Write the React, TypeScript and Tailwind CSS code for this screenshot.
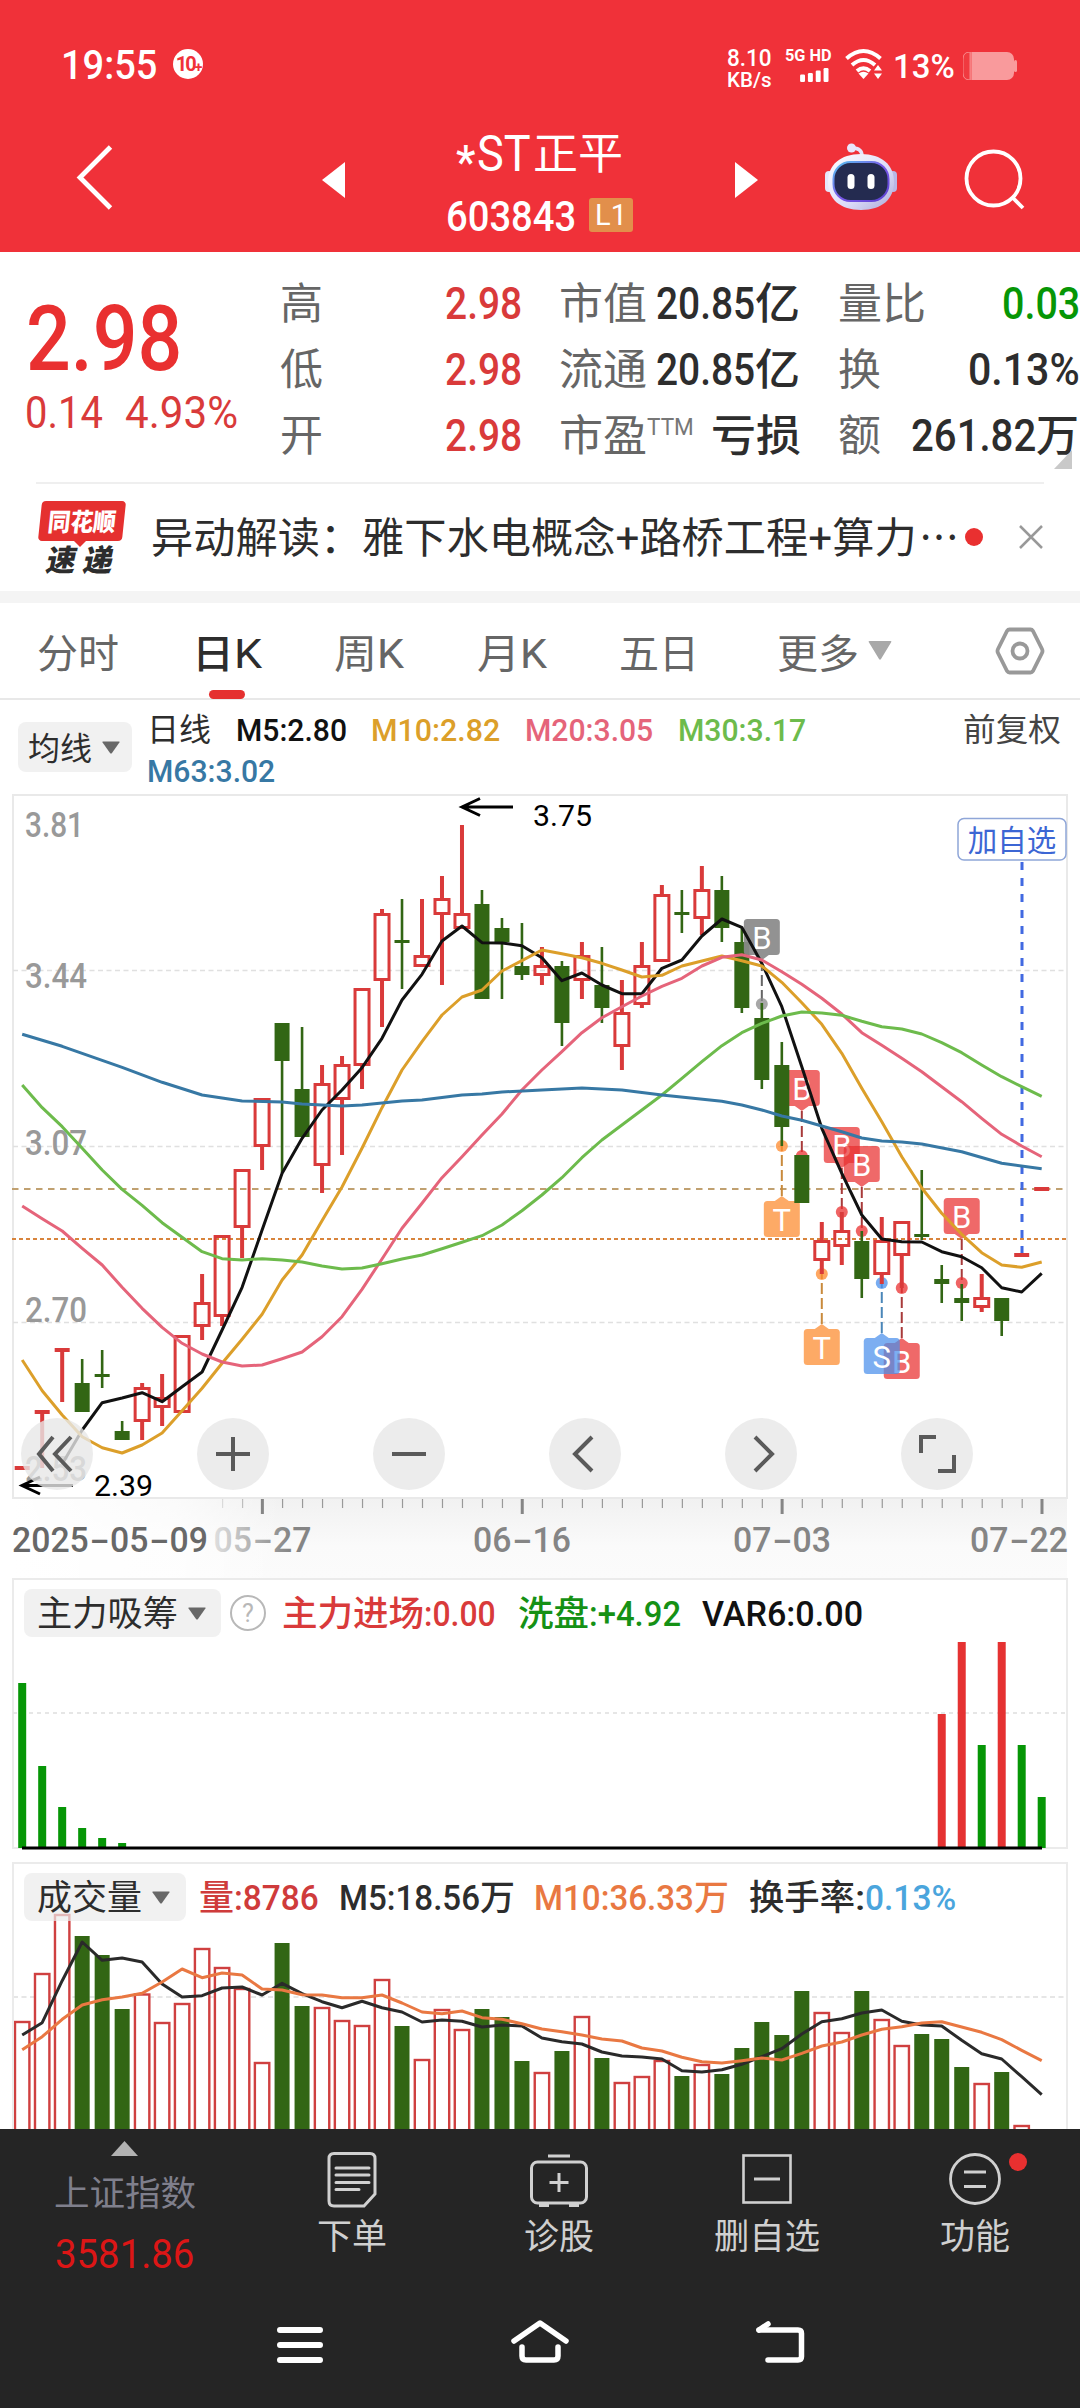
import { useLayoutEffect, useRef, useState, type ReactNode } from "react";

/** Text condensed or widened horizontally so that it fills its box exactly. */
function Fit({ className = "", children }: { className?: string; children: ReactNode }) {
  const box = useRef<HTMLDivElement>(null);
  const ink = useRef<HTMLSpanElement>(null);
  const [scale, setScale] = useState(1);
  useLayoutEffect(() => {
    if (box.current && ink.current && ink.current.offsetWidth > 0) {
      setScale(box.current.clientWidth / ink.current.offsetWidth);
    }
  }, []);
  return (
    <div ref={box} className={"shrink-0 leading-none whitespace-nowrap " + className}>
      <span ref={ink} className="inline-block origin-left" style={{ transform: `translateY(0.04em) scaleX(${scale})` }}>
        {children}
      </span>
    </div>
  );
}

const X0 = 22.2;
const STEP = 19.99;
const px = (i: number) => X0 + STEP * i;

/* [kind, high, top, bottom, low]; kind r = hollow red, g = solid green */
type Candle = ["r" | "g", number, number, number, number];
const candles: Candle[] = [
  ["r", 1468, 1468, 1468, 1468],
  ["r", 1411.5, 1412, 1412, 1468],
  ["r", 1350, 1350, 1350, 1402],
  ["g", 1359, 1383, 1412, 1412],
  ["g", 1350, 1376, 1376, 1388],
  ["g", 1421, 1431, 1440, 1440],
  ["r", 1383, 1387, 1422, 1440],
  ["r", 1374, 1397, 1408, 1426],
  ["r", 1335, 1335, 1413, 1413],
  ["r", 1274, 1302, 1327, 1340],
  ["r", 1235, 1235, 1317, 1326],
  ["r", 1169, 1169, 1228, 1258],
  ["r", 1098, 1098, 1147, 1170],
  ["g", 1023, 1023, 1061, 1173],
  ["g", 1027, 1089, 1137, 1137],
  ["r", 1065, 1083, 1166, 1193],
  ["r", 1056, 1064, 1100, 1155],
  ["r", 988, 988, 1066, 1089],
  ["r", 909, 913, 981, 1027],
  ["g", 899, 942, 942, 989],
  ["r", 899, 955, 967, 967],
  ["r", 876, 898, 915, 985],
  ["r", 825, 913, 929, 929],
  ["g", 890, 904, 999, 999],
  ["g", 918, 928, 942, 999],
  ["g", 923, 966, 975, 980],
  ["r", 947, 965, 976, 985],
  ["g", 961, 966, 1023, 1046],
  ["r", 942, 955, 981, 999],
  ["g", 947, 985, 1008, 1023],
  ["r", 980, 1012, 1047, 1070],
  ["r", 942, 965, 1005, 1008],
  ["r", 885, 894, 962, 962],
  ["g", 890, 914, 914, 933],
  ["r", 866, 889, 919, 935],
  ["g", 876, 890, 928, 942],
  ["g", 928, 942, 1008, 1013],
  ["g", 1003, 1018, 1080, 1089],
  ["g", 1042, 1065, 1127, 1146],
  ["g", 1155, 1155, 1203, 1203],
  ["r", 1222, 1240, 1261, 1274],
  ["r", 1212, 1230, 1247, 1265],
  ["g", 1231, 1241, 1279, 1298],
  ["r", 1217, 1240, 1275, 1284],
  ["r", 1221, 1221, 1256, 1288],
  ["g", 1170, 1236, 1236, 1240],
  ["g", 1265, 1279, 1284, 1303],
  ["g", 1284, 1298, 1303, 1321],
  ["r", 1274, 1297, 1308, 1312],
  ["g", 1298, 1298, 1321, 1336],
  ["r", 1255, 1255, 1255, 1255],
  ["r", 1189, 1189, 1189, 1189],
];

const ma5 = [1464, 1430, 1402.7, 1398, 1392.7, 1401.7, 1386.7, 1372, 1330, 1287.3, 1230, 1173.3, 1138.3, 1110, 1090, 1067.7, 1038.3, 1000, 974.3, 941, 926, 942.7, 943, 945.7, 957.7, 980.7, 973, 985, 993.7, 993.7, 968.3, 960, 936, 919, 927.3, 963.3, 1006.7, 1066.7, 1128.3, 1173.3, 1215, 1239, 1241.7, 1242, 1251.7, 1256.7, 1267.7, 1287.7, 1292, 1273.3];
const ma10 = [1360, 1390.7, 1415, 1436.7, 1447.7, 1453, 1445, 1433, 1410.7, 1388.3, 1363.3, 1339.3, 1314.3, 1280, 1255, 1220.7, 1187, 1148.3, 1107.7, 1070, 1041.7, 1015, 997, 990, 971, 960.7, 950, 953.7, 957.7, 963.3, 970, 977, 975.3, 966, 961, 956, 960.7, 966, 982.3, 1002.7, 1024.3, 1053.3, 1088.3, 1121.7, 1156.7, 1188, 1213.3, 1234.3, 1252.7, 1265, 1267.3, 1262];
const ma20 = [1206, 1218.7, 1231, 1248.3, 1265, 1287.3, 1308.3, 1327.3, 1343.3, 1354, 1362, 1366, 1365, 1358.7, 1352, 1336.7, 1316.7, 1289.3, 1259, 1228.3, 1203.3, 1177.7, 1156.7, 1135, 1114, 1090, 1070, 1051.7, 1032.7, 1017.7, 1006.7, 996, 986.3, 978.3, 966, 957.3, 954.7, 960, 971.7, 984.3, 998.3, 1014, 1032.7, 1045.3, 1058.3, 1071.7, 1086.7, 1101.7, 1118.3, 1134.3, 1146, 1156.7];
const ma30 = [1085, 1107.7, 1126.7, 1148.3, 1170, 1189.3, 1205.3, 1222.7, 1237.3, 1251.7, 1258.7, 1260, 1258.7, 1260, 1262, 1266, 1269, 1268, 1263.7, 1259, 1255, 1248.7, 1242.3, 1235.7, 1225, 1210.7, 1195, 1177.7, 1157.7, 1140, 1125, 1110, 1095, 1078.3, 1061.7, 1045.7, 1032.7, 1023.3, 1016, 1012, 1013, 1015.3, 1021.3, 1026.7, 1029, 1034, 1042.7, 1052.7, 1065, 1076.7, 1086.7, 1096.3];
const ma63: [number, number][] = [[0, 1034.3], [2, 1046.3], [4, 1060.3], [5, 1067.3], [7, 1082.3], [9, 1095], [11, 1101], [13, 1102], [14, 1104], [16, 1106], [17, 1105], [19, 1101], [20, 1100], [22, 1095], [23, 1094], [24, 1092], [26, 1090], [28, 1088], [30, 1090], [32, 1095], [35, 1101.3], [36, 1105], [37, 1110], [38, 1116], [39, 1120.3], [41, 1131.7], [42, 1138], [43, 1141], [44, 1142], [45, 1144], [47, 1151.7], [49, 1163.3], [51, 1168.7]];

const line = (ys: number[], start = 0) => ys.map((y, k) => `${px(k + start).toFixed(1)},${y}`).join(" ");

/* [index, box top, dot y, letter, fill, stem] */
const GRAY = "#8a8a8a";
const RED = "#e93030";
const ORANGE = "#fd8a2c";
const BLUE = "#4a90ec";
const flags: [number, number, number, string, string, string][] = [
  [37, 919, 1004, "B", GRAY, "#666666"],
  [39, 1070, 1156, "B", RED, "#a83a3a"],
  [41, 1127, 1212, "B", RED, "#a83a3a"],
  [42, 1146, 1231, "B", RED, "#a83a3a"],
  [38, 1201, 1146, "T", ORANGE, "#c98a3c"],
  [40, 1329, 1274, "T", ORANGE, "#c98a3c"],
  [44, 1343, 1288, "B", RED, "#a83a3a"],
  [43, 1338, 1283, "S", BLUE, "#4a86b8"],
  [47, 1198, 1283, "B", RED, "#a83a3a"],
];

function Flag({ f }: { f: [number, number, number, string, string, string] }) {
  const [i, top, dot, letter, fill, stem] = f;
  const x = px(i);
  const below = top > dot;
  const tip = below ? top - 5 : top + 41;
  const base = below ? top : top + 36;
  return (
    <g>
      <line x1={x} x2={x} y1={tip} y2={dot} stroke={stem} strokeWidth="2" strokeDasharray="11 4" />
      <circle cx={x} cy={dot} r="6" fill={fill} opacity="0.75" />
      <g opacity={letter === "B" && fill === GRAY ? 0.93 : 0.72}>
        <rect x={x - 18} y={top} width="36" height="36" rx="3.5" fill={fill} />
        <path d={`M${x - 7} ${base}L${x} ${tip}L${x + 7} ${base}Z`} fill={fill} />
      </g>
      <text x={x} y={top + 29.5} textAnchor="middle" fontSize="31" fill="#fff" fontFamily="Roboto, sans-serif">
        {letter}
      </text>
    </g>
  );
}

/** Axis date set on fixed digit cells, with the hyphens stretched to a full cell. */
function AxisDate({ x, text, fill }: { x: number; text: string; fill: string }) {
  let at = x;
  return (
    <text y="1552" fill={fill}>
      {text.split(/(-)/).map((part, k) => {
        const start = at;
        const hyphen = part === "-";
        const w = hyphen ? 20 : part.length * 19.2;
        at += w + (hyphen ? 1.2 : 0);
        return (
          <tspan key={k} x={hyphen ? start + 1 : start} textLength={w} lengthAdjust="spacingAndGlyphs">
            {part}
          </tspan>
        );
      })}
    </text>
  );
}

function MainChart() {
  const ticks = Array.from({ length: 42 }, (_, k) => k + 10);
  return (
    <svg className="block" width="1080" height="788" viewBox="0 790 1080 788" fontFamily="Roboto, sans-serif">
      <defs>
        <linearGradient id="fadeText" gradientUnits="userSpaceOnUse" x1="205" x2="290" y1="0" y2="0">
          <stop offset="0" stopColor="#e9e9e9" />
          <stop offset="1" stopColor="#858585" />
        </linearGradient>
        <linearGradient id="axisBg" x1="0" x2="0" y1="0" y2="1">
          <stop offset="0" stopColor="#f1f1f1" />
          <stop offset="0.6" stopColor="#fafafa" />
          <stop offset="1" stopColor="#fbfbfb" />
        </linearGradient>
        <linearGradient id="axisFade" x1="0" x2="1" y1="0" y2="0">
          <stop offset="0" stopColor="#fff" />
          <stop offset="0.6" stopColor="#fff" stopOpacity="0.7" />
          <stop offset="1" stopColor="#fff" stopOpacity="0" />
        </linearGradient>
      </defs>
      <rect x="12" y="1499" width="1055" height="79" fill="url(#axisBg)" />
      <rect x="12" y="1499" width="270" height="79" fill="url(#axisFade)" />
      <rect x="13" y="795" width="1054" height="703" fill="#fff" stroke="#e9e9e9" strokeWidth="2" />
      {[970.5, 1146.5, 1322.5].map((y) => (
        <line key={y} x1="13" x2="1066" y1={y} y2={y} stroke="#e0e0e0" strokeWidth="1.5" strokeDasharray="5 3.5" />
      ))}
      <g fill="#999" fontSize="35" fontWeight="500">
        <text x="25" y="837" textLength="59" lengthAdjust="spacingAndGlyphs">3.81</text>
        <text x="25" y="988" textLength="62" lengthAdjust="spacingAndGlyphs">3.44</text>
        <text x="25" y="1155" textLength="62" lengthAdjust="spacingAndGlyphs">3.07</text>
        <text x="25" y="1322" textLength="62" lengthAdjust="spacingAndGlyphs">2.70</text>
        <text x="25" y="1481" textLength="62" lengthAdjust="spacingAndGlyphs">2.53</text>
      </g>
      <line x1="12" x2="1066" y1="1189" y2="1189" stroke="#c0a070" strokeWidth="2" strokeDasharray="6.5 5.5" />
      <line x1="12" x2="1066" y1="1239" y2="1239" stroke="#d8843c" strokeWidth="2" strokeDasharray="4 3" />
      <line x1="1022" x2="1022" y1="862" y2="1254" stroke="#4169e1" strokeWidth="3" strokeDasharray="8 8" />
      {candles.slice(0, 37).map((c, i) => <Bar key={i} c={c} i={i} />)}
      {flags.map((f, k) => <Flag key={k} f={f} />)}
      {candles.slice(37).map((c, i) => <Bar key={i} c={c} i={i + 37} />)}
      <g fill="none" strokeWidth="3" strokeLinejoin="round">
        <polyline points={line(ma5, 2)} stroke="#111" />
        <polyline points={line(ma10)} stroke="#dc9f2a" />
        <polyline points={line(ma20)} stroke="#e5647a" />
        <polyline points={line(ma30)} stroke="#6dbb4c" />
        <polyline points={ma63.map(([i, y]) => `${px(i)},${y}`).join(" ")} stroke="#3778a4" />
      </g>
      <g stroke="#000" strokeWidth="3" fill="none">
        <path d="M513 807H462M480 798.5L462 807L480 815.5" />
        <path d="M73 1485.500H22M40 1477L22 1485.500L40 1494" />
      </g>
      <g fill="#000" fontSize="30">
        <text x="533" y="826" textLength="59" lengthAdjust="spacingAndGlyphs">3.75</text>
        <text x="94" y="1495.500" textLength="59" lengthAdjust="spacingAndGlyphs">2.39</text>
      </g>
      <rect x="958" y="818.500" width="108" height="41.500" rx="6" fill="#fff" stroke="#8fa6d8" strokeWidth="1.500" />
      <text x="1012" y="851" textAnchor="middle" fontSize="29.5" fill="#3c66d4" fontFamily="'Noto Sans CJK SC', sans-serif">加自选</text>
      {ticks.map((i) => {
        const big = [12, 25, 38, 51].includes(i);
        return (
          <rect key={i} x={px(i) - (big ? 1.2 : 0.1)} y="1499" width={big ? 3 : 1.2} height={big ? 15 : 9} fill={big ? "#858585" : "#999"} opacity={i === 10 ? 0.3 : i === 11 ? 0.6 : 1} />
        );
      })}
      <g fontSize="35" fontWeight="500">
        <AxisDate x={12} text="2025-05-09" fill="#686868" />
        <AxisDate x={213.5} text="05-27" fill="url(#fadeText)" />
        <AxisDate x={473} text="06-16" fill="#858585" />
        <AxisDate x={733} text="07-03" fill="#858585" />
        <AxisDate x={970} text="07-22" fill="#858585" />
      </g>
    </svg>
  );
}

function Bar({ c, i }: { c: Candle; i: number }) {
  const [k, hi, top, bot, lo] = c;
  const x = px(i);
  const col = k === "r" ? "#d93a3a" : "#326614";
  const w = k === "r" ? 4 : 2.6;
  return (
    <g fill={col}>
      {hi < top && <rect x={x - w / 2} y={hi} width={w} height={top - hi} />}
      {lo > bot && <rect x={x - w / 2} y={bot} width={w} height={lo - bot} />}
      {top === bot ? (
        <rect x={x - 7.5} y={top - 2} width="15" height={k === "r" ? 4 : 3} />
      ) : k === "r" ? (
        <rect x={x - 7} y={top + 1.5} width="14" height={bot - top - 3} fill="none" stroke={col} strokeWidth="3" />
      ) : (
        <rect x={x - 7.5} y={top} width="15" height={bot - top} />
      )}
    </g>
  );
}

const inflow: [number, number, string][] = [
  [0, 1683, "#069606"], [1, 1766, "#069606"], [2, 1807, "#069606"], [3, 1828, "#069606"], [4, 1838, "#069606"], [5, 1843, "#069606"],
  [46, 1714, "#e53232"], [47, 1642, "#e53232"], [48, 1745, "#069606"], [49, 1642, "#e53232"], [50, 1745, "#069606"], [51, 1797, "#069606"],
];

const volumes: [string, number][] = [
  ["r", 2021], ["r", 1973], ["r", 1914], ["g", 1936], ["g", 1955], ["g", 2009], ["r", 1993.5], ["r", 2022], ["r", 2003], ["r", 1948],
  ["r", 1967], ["r", 1988], ["r", 2062], ["g", 1943], ["g", 2006], ["r", 2007], ["r", 2020], ["r", 2025], ["r", 1979], ["g", 2026],
  ["r", 2059], ["r", 2009], ["r", 2029], ["g", 2009], ["g", 2017], ["g", 2061], ["r", 2072], ["g", 2051], ["r", 2016], ["g", 2058],
  ["r", 2082], ["r", 2076], ["r", 2060], ["g", 2076], ["r", 2064], ["g", 2074], ["g", 2048], ["g", 2022], ["g", 2035], ["g", 1991],
  ["r", 2012], ["r", 2032], ["g", 1991], ["r", 2019], ["r", 2045], ["g", 2034], ["g", 2039], ["g", 2067], ["r", 2083], ["g", 2072], ["r", 2125],
];
const vol5 = [2035, 2022.7, 1980.7, 1942, 1960.3, 1958, 1962, 1984, 1997, 1995.7, 1988, 1987, 1995, 1983.3, 1993.7, 2001.7, 2007.7, 2001.3, 2007.7, 2012, 2022, 2020, 2021.3, 2027, 2025, 2026, 2038, 2041.7, 2044, 2052, 2056, 2057, 2059, 2070.7, 2072, 2069.7, 2064.3, 2056.7, 2048.7, 2034, 2021.7, 2018.7, 2013, 2010, 2021.3, 2025, 2026, 2040.3, 2053.7, 2059, 2076.7, 2094.7];
const vol10 = [2049.7, 2036.7, 2019.3, 2005, 1999.7, 1997, 1993.3, 1982, 1969, 1977.7, 1973, 1975, 1989, 1990, 1994.7, 1995, 1997.7, 1997.7, 1995, 2003, 2012, 2013.7, 2011, 2017.7, 2019.3, 2023.7, 2029, 2031.7, 2035, 2039, 2041, 2048, 2051, 2057.3, 2061.7, 2063, 2060.7, 2058, 2060, 2053.3, 2046, 2042, 2035, 2029.3, 2026.7, 2023, 2021.7, 2027, 2032.3, 2039.7, 2050.3, 2060.7];

function Caret({ className = "" }: { className?: string }) {
  return (
    <svg className={"shrink-0 " + className} width="18" height="13" viewBox="0 0 18 13">
      <path d="M1 0.500H17Q18 0.500 17.400 1.400L10 12Q9 13 8 12L0.600 1.400Q0 0.500 1 0.500Z" fill="#686868" />
    </svg>
  );
}

function StatusBar() {
  return (
    <div className="flex h-[128px] items-center pl-[61px] text-white">
      <Fit className="w-[96px] text-[40px] font-medium">19:55</Fit>
      <div className="ml-4 flex size-[30px] items-center justify-center rounded-full bg-white text-[20px] leading-none font-bold tracking-[-2px] text-[#f03139]">
        10<span className="mt-1.5 text-[14px]">+</span>
      </div>
      <div className="ml-[524px] flex h-[40px] flex-col justify-between pt-px font-medium">
        <Fit className="w-[45px] text-[24px] leading-[16px]">8.10</Fit>
        <Fit className="w-[45px] text-[21px] leading-[18px]">KB/s</Fit>
      </div>
      <div className="ml-[13px] flex h-[36px] flex-col items-end">
        <Fit className="w-[47px] text-[17px] leading-[14px] font-bold">5G HD</Fit>
        <svg className="mt-[5px]" width="35" height="17" viewBox="0 0 35 17" fill="#fff">
          <rect x="0" y="8" width="6" height="9" rx="1.5" />
          <rect x="9.5" y="6" width="6" height="11" rx="1.5" />
          <rect x="19" y="3" width="6" height="14" rx="1.5" />
          <rect x="28.5" y="0" width="6" height="17" rx="1.5" />
        </svg>
      </div>
      <svg className="ml-[13px] shrink-0" width="40" height="32" viewBox="0 0 40 32" fill="none" stroke="#fff" strokeWidth="4">
        <path d="M1.500 10.500Q18.500 -4.500 35.500 10.500" />
        <path d="M7 17Q18.500 7 30 17" />
        <path d="M12 23Q18.500 17.500 25 23" />
        <path d="M13.500 25.500Q18.500 22 23.500 25.500L18.500 31Z" fill="#fff" stroke="none" />
        <path d="M29 22.500L33 17L37 22.500ZM29 25.500L33 31L37 25.500Z" fill="#fff" stroke="none" />
      </svg>
      <Fit className="ml-[8px] w-[62px] pt-0.5 text-[33px] font-medium">13%</Fit>
      <svg className="ml-2 mt-[3px] shrink-0" width="56" height="28" viewBox="0 0 56 28">
        <rect x="0" y="0" width="51" height="28" rx="7" fill="#f99a9c" />
        <path d="M8 0V28" stroke="#f5686c" strokeWidth="1.500" />
        <path d="M7 0Q0 0 0 7V21Q0 28 7 28Z" fill="#f03a40" stroke="#f8888a" strokeWidth="1" />
        <rect x="51" y="8" width="3" height="12" rx="1.5" fill="#f99a9c" />
      </svg>
    </div>
  );
}

function Robot() {
  return (
    <svg className="ml-[65px] shrink-0" width="74" height="68" viewBox="0 0 74 68">
      <defs>
        <linearGradient id="shell" x1="0" x2="1" y1="0" y2="1">
          <stop offset="0" stopColor="#ffffff" />
          <stop offset="0.6" stopColor="#dcdcf8" />
          <stop offset="1" stopColor="#a9a9d8" />
        </linearGradient>
        <linearGradient id="rim" x1="0" x2="1" y1="0" y2="1">
          <stop offset="0" stopColor="#56c4f0" />
          <stop offset="0.5" stopColor="#7a5ae8" />
          <stop offset="1" stopColor="#5a3fd0" />
        </linearGradient>
      </defs>
      <path d="M38 13Q38 5 28 5" fill="none" stroke="#e6e4fb" strokeWidth="3.500" />
      <circle cx="27.500" cy="5" r="4.500" fill="#e9e6fc" />
      <rect x="1" y="28" width="8" height="21" rx="4" fill="#e6e6fb" />
      <rect x="65" y="28" width="8" height="21" rx="4" fill="#b9b7e6" />
      <path d="M37 11C58 11 70 22 70 39C70 56 58 67 37 67C16 67 4 56 4 39C4 22 16 11 37 11Z" fill="url(#shell)" />
      <rect x="9.500" y="19" width="55" height="39" rx="17" fill="#242b50" stroke="url(#rim)" strokeWidth="2" />
      <rect x="23.500" y="31" width="7" height="15" rx="3.500" fill="#fff" />
      <rect x="43.500" y="31" width="7" height="15" rx="3.500" fill="#fff" />
    </svg>
  );
}

function TitleBar() {
  return (
    <div className="flex h-[124px] pl-[76px] text-white">
      <svg className="mt-[17px] shrink-0" width="38" height="66" viewBox="0 0 38 66">
        <path d="M34.500 2L4 32.500L34.500 63" fill="none" stroke="#fff" strokeWidth="4.800" />
      </svg>
      <svg className="mt-[34px] ml-[207px] shrink-0" width="25" height="36" viewBox="0 0 25 36">
        <path d="M1 18L24 0V36Z" fill="#fff" />
      </svg>
      <div className="ml-[99px] flex w-[193px] flex-col">
        <div className="flex h-[48px] items-center pl-[11px]">
          <Fit className="w-[19px] pt-4 text-[46px] font-medium">*</Fit>
          <Fit className="ml-[2px] w-[54px] text-[50px]">ST</Fit>
          <Fit className="ml-0.5 w-[90px] text-[43px]">正平</Fit>
        </div>
        <div className="mt-[22px] flex h-[34px] items-center pl-px">
          <Fit className="w-[130px] text-[42px] font-medium">603843</Fit>
          <div className="ml-[13px] flex h-[34px] w-[44px] items-center justify-center rounded-[3px] bg-[#e28f4b] pt-px text-[29px] leading-none">
            L1
          </div>
        </div>
      </div>
      <svg className="mt-[34px] ml-[96px] shrink-0" width="25" height="36" viewBox="0 0 25 36">
        <path d="M24 18L1 0V36Z" fill="#fff" />
      </svg>
      <div className="mt-[15px] flex">
        <Robot />
      </div>
      <svg className="mt-[20px] ml-[66px] shrink-0" width="62" height="62" viewBox="0 0 62 62" fill="none" stroke="#fff" strokeWidth="3.800">
        <circle cx="29.500" cy="30.500" r="27" />
        <path d="M49 50L59 60" />
      </svg>
    </div>
  );
}

function Quote() {
  const red = "text-[#d93a3a]";
  return (
    <div className="flex h-[230px] bg-white pl-[26px] text-[#2d2d2d]">
      <div className="w-[254px] shrink-0">
        <Fit className="mt-[38px] h-[90px] w-[156px] text-[91px] font-medium text-[#e93030]">2.98</Fit>
        <div className="mt-[9px] flex gap-[22px] text-[#d93a3a]">
          <Fit className="-ml-px w-[78px] text-[44px]">0.14</Fit>
          <Fit className="w-[113px] text-[44px]">4.93%</Fit>
        </div>
      </div>
      <div className="mt-[17px] w-[242px] shrink-0">
        {["高", "低", "开"].map((t) => (
          <div key={t} className="flex h-[66px] items-center justify-between">
            <Fit className="w-[43px] text-[43px] text-[#666]">{t}</Fit>
            <Fit className={"w-[77px] text-[44px] font-medium " + red}>2.98</Fit>
          </div>
        ))}
      </div>
      <div className="mt-[17px] ml-[37px] w-[242px] shrink-0">
        <div className="flex h-[66px] items-center">
          <Fit className="w-[88px] text-[43px] text-[#666]">市值</Fit>
          <Fit className="ml-[9px] w-[99px] text-[44px] font-medium">20.85</Fit>
          <Fit className="w-[45px] text-[43px] font-medium">亿</Fit>
        </div>
        <div className="flex h-[66px] items-center">
          <Fit className="w-[88px] text-[43px] text-[#666]">流通</Fit>
          <Fit className="ml-[9px] w-[99px] text-[44px] font-medium">20.85</Fit>
          <Fit className="w-[45px] text-[43px] font-medium">亿</Fit>
        </div>
        <div className="flex h-[66px] items-center">
          <Fit className="w-[88px] text-[43px] text-[#666]">市盈</Fit>
          <Fit className="w-[47px] pb-4 text-[24px] text-[#777]">TTM</Fit>
          <Fit className="ml-[17px] w-[90px] text-[43px] font-medium">亏损</Fit>
        </div>
      </div>
      <div className="relative mt-[17px] ml-[37px] w-[242px] shrink-0">
        <div className="flex h-[66px] items-center justify-between">
          <Fit className="w-[88px] text-[43px] text-[#666]">量比</Fit>
          <Fit className="w-[78px] text-[44px] font-medium text-[#069606]">0.03</Fit>
        </div>
        <div className="flex h-[66px] items-center justify-between">
          <Fit className="w-[43px] text-[43px] text-[#666]">换</Fit>
          <Fit className="w-[112px] text-[44px] font-medium">0.13%</Fit>
        </div>
        <div className="flex h-[66px] items-center">
          <Fit className="w-[43px] text-[43px] text-[#666]">额</Fit>
          <Fit className="ml-[30px] w-[125px] text-[44px] font-medium">261.82</Fit>
          <Fit className="w-[43px] text-[43px] font-medium">万</Fit>
        </div>
        <svg className="absolute top-[181px] left-[216px]" width="18" height="19" viewBox="0 0 18 19">
          <path d="M18 0V19H0Z" fill="#c9c9c9" />
        </svg>
      </div>
    </div>
  );
}

function News() {
  return (
    <div className="bg-white px-9">
      <div className="flex h-[109px] border-t-2 border-[#efefef] pt-[17px]">
        <div className="w-[90px] shrink-0">
          <div className="relative ml-1 flex h-[40px] w-[84px] items-center justify-center">
            <div className="absolute inset-0 -skew-x-6 rounded-[4px] bg-[#e5302f]" />
            <svg className="absolute top-[39px] left-[33px]" width="14" height="7" viewBox="0 0 14 7">
              <path d="M0 0H14L7 7Z" fill="#e5302f" />
            </svg>
            <Fit className="relative w-[68px] -skew-x-6 text-[25px] font-black text-white">同花顺</Fit>
          </div>
          <Fit className="mt-1 ml-[11px] h-[32px] w-[66px] -skew-x-12 text-[30px] leading-[30px] font-black text-[#2d2d2d]">速 递</Fit>
        </div>
        <Fit className="ml-[25px] w-[766px] pt-[15px] text-[42px] text-[#2d2d2d]">异动解读：雅下水电概念+路桥工程+算力</Fit>
        <Fit className="ml-[2px] w-[40px] pt-[15px] text-[42px] text-[#2d2d2d]">⋯</Fit>
        <div className="mt-[27px] ml-[6px] size-[18px] shrink-0 rounded-full bg-[#e93030]" />
        <svg className="mt-[23px] ml-[35px] shrink-0" width="26" height="26" viewBox="0 0 26 26">
          <path d="M2 2L24 24M24 2L2 24" stroke="#999" strokeWidth="2.500" />
        </svg>
      </div>
      <div className="-mx-9 h-3 bg-[#f4f4f4]" />
    </div>
  );
}

function Tabs() {
  return (
    <div className="relative flex h-[97px] items-center border-b-2 border-[#e8e8e8] bg-white pl-[37px] text-[40px] text-[#666]">
      <Fit className="w-[82px] pt-1">分时</Fit>
      <div className="ml-[73px] flex pt-1">
        <Fit className="w-[42px] font-medium text-[#2d2d2d]">日</Fit>
        <Fit className="w-[28px] text-[#2d2d2d]">K</Fit>
      </div>
      <Fit className="ml-[72px] w-[70px] pt-1">周K</Fit>
      <Fit className="ml-[73px] w-[70px] pt-1">月K</Fit>
      <Fit className="ml-[72px] w-[80px] pt-1">五日</Fit>
      <Fit className="ml-[78px] w-[82px] pt-1">更多</Fit>
      <svg className="ml-[9px] shrink-0" width="24" height="19" viewBox="0 0 24 19">
        <path d="M1.500 0H22.500Q24 0 23 1.500L13 18Q12 19.500 11 18L1 1.500Q0 0 1.500 0Z" fill="#a8a8a8" />
      </svg>
      <svg className="ml-[103px] shrink-0" width="50" height="48" viewBox="0 0 50 48" fill="none" stroke="#999" strokeWidth="3.800" strokeLinejoin="round">
        <path d="M14.500 2.500H35.500Q37 2.500 38 4L47 22Q48 24 47 26L38 44Q37 45.500 35.500 45.500H14.500Q13 45.500 12 44L3 26Q2 24 3 22L12 4Q13 2.500 14.500 2.500Z" />
        <circle cx="25" cy="24" r="7.500" />
      </svg>
      <div className="absolute top-[87px] left-[209px] h-[9px] w-[36px] rounded-full bg-[#e5302f]" />
    </div>
  );
}

function Averages() {
  return (
    <div className="flex h-[90px] bg-white pl-[18px]">
      <div className="mt-[22px] flex h-[50px] w-[114px] shrink-0 items-center rounded-lg bg-[#f1f1f1] pl-[10px] text-[#2d2d2d]">
        <Fit className="w-[64px] pt-0.5 text-[32px]">均线</Fit>
        <Caret className="ml-[10px]" />
      </div>
      <div className="ml-[15px] w-[660px] shrink-0">
        <div className="mt-[12px] flex h-[34px] items-center text-[32px]">
          <Fit className="w-[64px] text-[#2d2d2d]">日线</Fit>
          <Fit className="ml-[25px] w-[111px] font-medium text-[#111]">M5:2.80</Fit>
          <Fit className="ml-[24px] w-[129px] font-medium text-[#dc9f2a]">M10:2.82</Fit>
          <Fit className="ml-[25px] w-[128px] font-medium text-[#e5647a]">M20:3.05</Fit>
          <Fit className="ml-[25px] w-[128px] font-medium text-[#6dbb4c]">M30:3.17</Fit>
        </div>
        <div className="mt-[7px] flex h-[34px] items-center text-[32px]">
          <Fit className="w-[128px] font-medium text-[#3778a4]">M63:3.02</Fit>
        </div>
      </div>
      <Fit className="mt-[13px] ml-[156px] w-[98px] text-[32px] text-[#444]">前复权</Fit>
    </div>
  );
}

const controls = [
  "M-4 -17L-18 0L-4 17M14 -17L-2 0L14 17",
  "M-17 0H17M0 -17V17",
  "M-17 0H17",
  "M7 -17L-10 0L7 17",
  "M-6 -17L11 0L-6 17",
  "M-16 -1V-17H-1M1 17H17V1",
];

function ChartArea() {
  return (
    <div className="relative bg-white">
      <MainChart />
      <div className="absolute top-[628px] left-[21px] flex gap-[104px]">
        {controls.map((d) => (
          <svg key={d} className="rounded-full bg-[#e7e7e7]/80" width="72" height="72" viewBox="-36 -36 72 72">
            <path d={d} fill="none" stroke="#5a5a5a" strokeWidth="4" />
          </svg>
        ))}
      </div>
    </div>
  );
}

function InflowPanel() {
  return (
    <div className="relative h-[284px] bg-white px-3">
      <div className="flex h-[271px] w-[1056px] items-start border-2 border-[#ebebeb] pt-[9px] pl-[10px] text-[35px]">
        <div className="flex h-[48px] w-[197px] shrink-0 items-center rounded-lg bg-[#f1f1f1] pl-[13px] text-[#2d2d2d]">
          <Fit className="w-[141px]">主力吸筹</Fit>
          <Caret className="ml-[10px]" />
        </div>
        <div className="mt-[6px] ml-[9px] flex size-[36px] shrink-0 items-center justify-center rounded-full border-[2.5px] border-[#b8b8b8] text-[25px] leading-none text-[#b8b8b8]">
          ?
        </div>
        <div className="ml-[16px] flex h-[48px] items-center font-medium">
          <Fit className="w-[142px] text-[#d93a3a]">主力进场</Fit>
          <Fit className="w-[72px] text-[#d93a3a]">:0.00</Fit>
          <Fit className="ml-[22px] w-[71px] text-[#159115]">洗盘</Fit>
          <Fit className="w-[92px] text-[#159115]">:+4.92</Fit>
          <Fit className="ml-[21px] w-[161px] text-[#111]">VAR6:0.00</Fit>
        </div>
      </div>
      <svg className="absolute top-0 left-0" width="1080" height="284" viewBox="0 1578 1080 284">
        <line x1="13" x2="1066" y1="1713" y2="1713" stroke="#e6e6e6" strokeWidth="2" strokeDasharray="4 4" />
        {inflow.map(([i, y, c]) => (
          <rect key={i} x={px(i) - 4} y={y} width="8" height={1848 - y} fill={c} />
        ))}
        <line x1="22" x2="1042" y1="1848" y2="1848" stroke="#000" strokeWidth="3" />
      </svg>
    </div>
  );
}

function VolumePanel() {
  return (
    <div className="relative h-[267px] overflow-hidden bg-white px-3">
      <svg className="absolute top-0 left-0" width="1080" height="267" viewBox="0 1862 1080 267">
        <line x1="13" x2="1066" y1="1997" y2="1997" stroke="#e6e6e6" strokeWidth="2" strokeDasharray="5 3.500" />
        {volumes.map(([k, y], i) =>
          k === "r" ? (
            <rect key={i} x={px(i) - 7.2} y={y + 1} width="14.4" height="300" fill="#fff" stroke="#cf4040" strokeWidth="2.400" />
          ) : (
            <rect key={i} x={px(i) - 7.5} y={y} width="15" height="300" fill="#326614" />
          )
        )}
        <g fill="none" strokeWidth="3" strokeLinejoin="round">
          <polyline points={line(vol5)} stroke="#2a2a2a" />
          <polyline points={line(vol10)} stroke="#e97842" />
        </g>
      </svg>
      <div className="relative flex h-[300px] w-[1056px] items-start border-2 border-[#ebebeb] pt-[9px] pl-[10px] text-[35px]">
        <div className="flex h-[48px] w-[162px] shrink-0 items-center rounded-lg bg-[#ebebeb]/70 pl-[13px] text-[#2d2d2d]">
          <Fit className="w-[105px]">成交量</Fit>
          <Caret className="ml-[10px]" />
        </div>
        <div className="ml-[13px] flex h-[48px] items-center font-medium text-[#2d2d2d]">
          <Fit className="w-[35px] text-[#cf3b3b]">量</Fit>
          <Fit className="w-[85px] text-[#cf3b3b]">:8786</Fit>
          <Fit className="ml-[20px] w-[141px]">M5:18.56</Fit>
          <Fit className="w-[35px]">万</Fit>
          <Fit className="ml-[19px] w-[160px] text-[#e97842]">M10:36.33</Fit>
          <Fit className="w-[35px] text-[#e97842]">万</Fit>
          <Fit className="ml-[20px] w-[106px]">换手率</Fit>
          <Fit className="w-[10px]">:</Fit>
          <Fit className="w-[91px] text-[#4aa5dd]">0.13%</Fit>
        </div>
      </div>
    </div>
  );
}

function BottomBar() {
  const label = "text-[35px] text-[#d0d0d0]";
  return (
    <div className="flex h-[160px] bg-[#252525]">
      <div className="flex w-[249px] shrink-0 flex-col items-center pt-[12px]">
        <svg width="27" height="15" viewBox="0 0 27 15">
          <path d="M13.500 0L27 15H0Z" fill="#b2b2b2" />
        </svg>
        <Fit className="mt-[20px] w-[142px] text-[35px] text-[#7f7f8c]">上证指数</Fit>
        <Fit className="mt-[22px] w-[139px] text-[40px] text-[#dc1616]">3581.86</Fit>
      </div>
      <div className="flex w-[206px] shrink-0 flex-col items-center pt-[22px]">
        <svg width="52" height="58" viewBox="0 0 52 58" fill="none" stroke="#d0d0d0" strokeWidth="3">
          <path d="M8 2.500H44Q49 2.500 49 7.500V43L38 55H8Q3 55 3 50V7.500Q3 2.500 8 2.500Z" />
          <path d="M10 17H43M10 24H43M10 31.500H43M10 38.500H33" strokeLinecap="round" />
        </svg>
        <Fit className={"mt-[10px] w-[70px] " + label}>下单</Fit>
      </div>
      <div className="flex w-[208px] shrink-0 flex-col items-center pt-[25px]">
        <svg width="58" height="55" viewBox="0 0 58 55" fill="none" stroke="#d0d0d0" strokeWidth="3">
          <rect x="1.5" y="8" width="55" height="41" rx="6" />
          <path d="M18 2H40M29 19V38M19.500 28.500H38.500" />
          <path d="M9 51H19M39 51H49" strokeWidth="4" />
        </svg>
        <Fit className={"mt-[10px] w-[70px] " + label}>诊股</Fit>
      </div>
      <div className="flex w-[208px] shrink-0 flex-col items-center pt-[25px]">
        <svg width="50" height="50" viewBox="0 0 50 50" fill="none" stroke="#d0d0d0" strokeWidth="2.600">
          <rect x="1.5" y="1.5" width="47" height="47" />
          <path d="M12 25H38" strokeWidth="3" />
        </svg>
        <Fit className={"mt-[15px] w-[106px] " + label}>删自选</Fit>
      </div>
      <div className="relative flex w-[208px] shrink-0 flex-col items-center pt-[24px]">
        <svg width="52" height="52" viewBox="0 0 52 52" fill="none" stroke="#d0d0d0" strokeWidth="2.800">
          <circle cx="26" cy="26" r="24.500" />
          <path d="M15 19H37M15 33.500H37" strokeWidth="3" />
        </svg>
        <div className="absolute top-[24px] left-[138px] size-[18px] rounded-full bg-[#e93030]" />
        <Fit className={"mt-[14px] w-[70px] " + label}>功能</Fit>
      </div>
    </div>
  );
}

function NavBar() {
  return (
    <div className="flex h-[119px] items-start bg-[#252525] pl-[276px] pt-[30px]">
      <svg width="48" height="46" viewBox="0 0 48 46" stroke="#fff" strokeWidth="6" strokeLinecap="round">
        <path d="M4 11H44M4 26H44M4 41H44" />
      </svg>
      <svg className="ml-[186px]" width="60" height="46" viewBox="0 0 60 46" fill="none" stroke="#fff" strokeWidth="5.500" strokeLinecap="round" strokeLinejoin="round">
        <path d="M4 22L30 4L56 22" />
        <path d="M12 28V37Q12 41 16 41H44Q48 41 48 37V28" />
      </svg>
      <svg className="ml-[185px]" width="50" height="46" viewBox="0 0 50 46" fill="none" stroke="#fff" strokeWidth="5.500" strokeLinecap="round" strokeLinejoin="round">
        <path d="M4 11H43Q46.500 11 46.500 14.500V37.500Q46.500 41 43 41H13" />
        <path d="M13 5L4 11" />
      </svg>
    </div>
  );
}

export default function App() {
  return (
    <div className="h-[2408px] w-[1080px] overflow-hidden bg-white font-[Roboto,'Noto_Sans_CJK_SC',sans-serif]">
      <div className="bg-[#f03139]">
        <StatusBar />
        <TitleBar />
      </div>
      <Quote />
      <News />
      <Tabs />
      <Averages />
      <ChartArea />
      <InflowPanel />
      <VolumePanel />
      <BottomBar />
      <NavBar />
    </div>
  );
}
